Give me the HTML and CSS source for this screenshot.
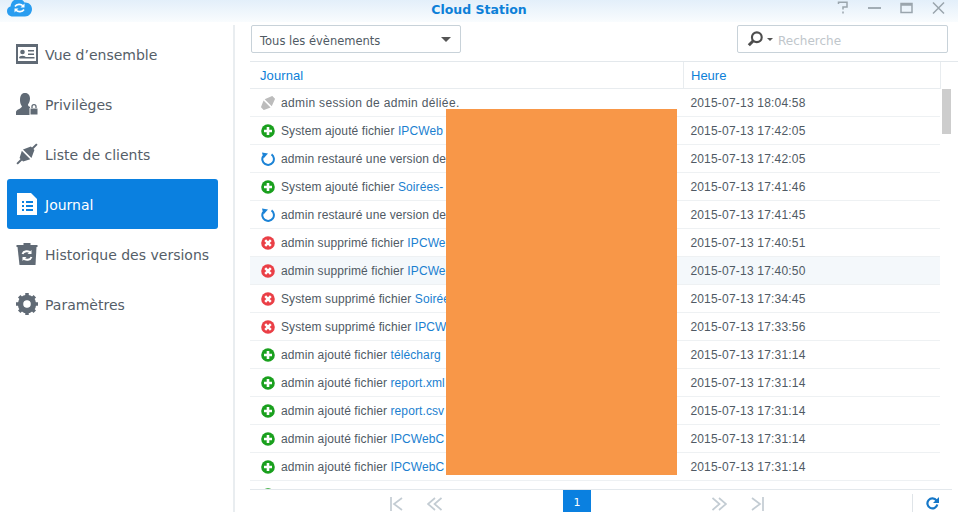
FILE: index.html
```html
<!DOCTYPE html>
<html lang="en">

<head>
    <meta charset="UTF-8">
    <meta name="viewport" content="width=device-width, initial-scale=1.0">
    <title>Cloud Station</title>
    <link rel="stylesheet" href="styles.css">
</head>

<body>
    <svg class="defs" width="0" height="0">
        <symbol id="add" viewBox="0 0 14 14">
            <circle cx="7" cy="7" r="6.8" fill="#1aa01e"/>
            <path d="M7 3v8M3 7h8" stroke="#fff" stroke-width="2.600"/>
        </symbol>
        <symbol id="del" viewBox="0 0 14 14">
            <circle cx="7" cy="7" r="6.8" fill="#ea3f46"/>
            <path d="M4.2 4.2l5.6 5.6M9.8 4.2l-5.6 5.6" stroke="#fff" stroke-width="2.500"/>
        </symbol>
        <symbol id="restore" viewBox="0 0 14 14">
            <path d="M10.5 2.4A5.8 5.8 0 1 1 2.2 4" fill="none" stroke="#1b83d6" stroke-width="2"/>
            <path d="M1 .4l6 1.200-4.500 5z" fill="#1b83d6"/>
        </symbol>
        <symbol id="plug" viewBox="0 0 14 14">
            <path transform="rotate(-45 7 7)" d="M-1 5L5.700 2v10L-1 9zM7.300 2L15 5v4l-7.700 3z" fill="#bcbcbc"/>
        </symbol>
    </svg>

    <header class="titlebar">
        <svg class="app-logo" width="25" height="18" viewBox="0 0 25 18">
            <path d="M6 17.500C2 17.500 0 15 0 12c0-2.500 1.500-4 3.500-4.500C4 3 7 0 11 0c3 0 5 1 6.500 3.500 4-.5 7.500 2.500 7.500 6.500 0 4-3 7.500-7 7.500z" fill="#2a9df0"/>
            <path d="M8 7.500c1.500-2.500 6-3 8-.5M17 10.500c-1.500 2.500-6 3-8 .5" fill="none" stroke="#fff" stroke-width="1.600"/>
            <path d="M17.500 4.500v4h-4zM7.500 13.500v-4h4z" fill="#fff"/>
        </svg>
        <div class="app-title">Cloud Station</div>
        <div class="win-buttons">
            <svg width="12" height="14" viewBox="0 0 12 14"><path d="M1.500 3V1.200h8.500V6H6v2.500M6 10.500v2" fill="none" stroke="#9aa5ad" stroke-width="1.500"/></svg>
            <svg width="13" height="14" viewBox="0 0 13 14"><path d="M0 7h13" stroke="#9aa5ad" stroke-width="1.800"/></svg>
            <svg width="13" height="14" viewBox="0 0 13 14"><path d="M1 2.500h11v9H1z" fill="none" stroke="#9aa5ad" stroke-width="1.500"/><path d="M1 3.500h11" stroke="#9aa5ad" stroke-width="2.500"/></svg>
            <svg width="13" height="14" viewBox="0 0 13 14"><path d="M1 1.500l11 11M12 1.500l-11 11" stroke="#9aa5ad" stroke-width="1.500"/></svg>
        </div>
    </header>

    <div class="app">
        <nav class="sidebar">
            <a class="navItem">
                <svg width="22" height="20" viewBox="0 0 22 20"><path d="M0 0h22v20H0z" fill="#606a75"/><path d="M2 3h18v14H2z" fill="#fff"/><circle cx="6.500" cy="8" r="2.300" fill="#606a75"/><path d="M3 14c0-3 7-3 7 0zM12 6h6v1.500h-6zM12 9.500h6V11h-6zM3.500 13h15v1.500h-15z" fill="#606a75"/></svg>
                <span>Vue d’ensemble</span>
            </a>
            <a class="navItem">
                <svg width="22" height="22" viewBox="0 0 22 22"><path d="M9 0c3.500 0 5 2.500 5 5.500 0 2.500-1 4.500-2 6 0 1.500 1 2 2 2.500v8H0v-3c0-2.500 5-3 6-5.500-1-1.500-2-3.500-2-6C4 2.500 5.500 0 9 0z" fill="#606a75"/><path d="M14 15h8v7h-8z" fill="#606a75" stroke="#fff"/><path d="M16 15v-1.500c0-2.500 4-2.500 4 0V15" fill="none" stroke="#606a75" stroke-width="1.300"/></svg>
                <span>Privilèges</span>
            </a>
            <a class="navItem">
                <svg width="22" height="22" viewBox="0 0 22 22"><g transform="rotate(-45 11 11)"><path d="M-3 11H4M18 11h7" stroke="#606a75" stroke-width="2"/><path d="M3 8.500L9.700 5v12L3 13.500zM11.300 5L19 8.500v5L11.300 17z" fill="#606a75"/></g></svg>
                <span>Liste de clients</span>
            </a>
            <a class="navItem active">
                <svg width="20" height="22" viewBox="0 0 20 22"><path d="M0 0h14l6 6v16H0z" fill="#fff"/><path d="M5 8h2v2H5zM9 8h7v2H9zM5 12h2v2H5zM9 12h7v2H9zM5 16h2v2H5zM9 16h7v2H9z" fill="#0a80e0"/></svg>
                <span>Journal</span>
            </a>
            <a class="navItem">
                <svg width="21" height="22" viewBox="0 0 21 22"><path d="M1 4h19l-1 18H3z" fill="#606a75"/><path d="M0 2h7V0h7v2h7v2H0z" fill="#606a75"/><path d="M6 11c1-3 6-4 8-1M15 14c-1 3-6 4-8 1" fill="none" stroke="#fff" stroke-width="2"/><path d="M15 7v4h-4zM6 18v-4h4z" fill="#fff"/></svg>
                <span>Historique des versions</span>
            </a>
            <a class="navItem">
                <svg width="22" height="22" viewBox="0 0 22 22"><circle cx="11" cy="11" r="6.500" fill="none" stroke="#606a75" stroke-width="5.500"/><path d="M11 0v22M0 11h22M3.200 3.200l15.600 15.600M18.800 3.200L3.200 18.800" stroke="#606a75" stroke-width="3.500" stroke-dasharray="3.500 15"/><circle cx="11" cy="11" r="3.200" fill="#fff"/></svg>
                <span>Paramètres</span>
            </a>
        </nav>

        <main class="content">
            <div class="toolbar">
                <div class="select">
                    <span>Tous les évènements</span>
                    <i class="caret"></i>
                </div>
                <div class="search">
                    <svg width="17" height="16" viewBox="0 0 19 18"><circle cx="11" cy="7" r="5.500" fill="none" stroke="#4d4d4d" stroke-width="2.400"/><path d="M7 11l-5 5" stroke="#4d4d4d" stroke-width="3.400"/></svg>
                    <i class="caret small"></i>
                    <span>Recherche</span>
                </div>
            </div>

            <div class="grid">
                <div class="gridHead">
                    <div class="col-log">Journal</div>
                    <div class="col-time">Heure</div>
                </div>
                <div class="gridBody">
                    <div class="row">
                        <div class="col-log first"><svg class="rowIcon"><use href="#plug"/></svg>admin session de admin déliée.</div>
                        <div class="col-time">2015-07-13 18:04:58</div>
                    </div>
                    <div class="row">
                        <div class="col-log"><svg class="rowIcon"><use href="#add"/></svg>System ajouté fichier <a>IPCWeb</a></div>
                        <div class="col-time">2015-07-13 17:42:05</div>
                    </div>
                    <div class="row">
                        <div class="col-log"><svg class="rowIcon"><use href="#restore"/></svg>admin restauré une version de</div>
                        <div class="col-time">2015-07-13 17:42:05</div>
                    </div>
                    <div class="row">
                        <div class="col-log"><svg class="rowIcon"><use href="#add"/></svg>System ajouté fichier <a>Soirées-</a></div>
                        <div class="col-time">2015-07-13 17:41:46</div>
                    </div>
                    <div class="row">
                        <div class="col-log"><svg class="rowIcon"><use href="#restore"/></svg>admin restauré une version de</div>
                        <div class="col-time">2015-07-13 17:41:45</div>
                    </div>
                    <div class="row">
                        <div class="col-log"><svg class="rowIcon"><use href="#del"/></svg>admin supprimé fichier <a>IPCWeb</a></div>
                        <div class="col-time">2015-07-13 17:40:51</div>
                    </div>
                    <div class="row hover">
                        <div class="col-log"><svg class="rowIcon"><use href="#del"/></svg>admin supprimé fichier <a>IPCWeb</a></div>
                        <div class="col-time">2015-07-13 17:40:50</div>
                    </div>
                    <div class="row">
                        <div class="col-log"><svg class="rowIcon"><use href="#del"/></svg>System supprimé fichier <a>Soirées</a></div>
                        <div class="col-time">2015-07-13 17:34:45</div>
                    </div>
                    <div class="row">
                        <div class="col-log"><svg class="rowIcon"><use href="#del"/></svg>System supprimé fichier <a>IPCWeb</a></div>
                        <div class="col-time">2015-07-13 17:33:56</div>
                    </div>
                    <div class="row">
                        <div class="col-log"><svg class="rowIcon"><use href="#add"/></svg>admin ajouté fichier <a>télécharg</a></div>
                        <div class="col-time">2015-07-13 17:31:14</div>
                    </div>
                    <div class="row">
                        <div class="col-log"><svg class="rowIcon"><use href="#add"/></svg>admin ajouté fichier <a>report.xml</a></div>
                        <div class="col-time">2015-07-13 17:31:14</div>
                    </div>
                    <div class="row">
                        <div class="col-log"><svg class="rowIcon"><use href="#add"/></svg>admin ajouté fichier <a>report.csv</a></div>
                        <div class="col-time">2015-07-13 17:31:14</div>
                    </div>
                    <div class="row">
                        <div class="col-log"><svg class="rowIcon"><use href="#add"/></svg>admin ajouté fichier <a>IPCWebC</a></div>
                        <div class="col-time">2015-07-13 17:31:14</div>
                    </div>
                    <div class="row">
                        <div class="col-log"><svg class="rowIcon"><use href="#add"/></svg>admin ajouté fichier <a>IPCWebC</a></div>
                        <div class="col-time">2015-07-13 17:31:14</div>
                    </div>
                    <!-- only the top of the next icon shows above the pager -->
                    <div class="row">
                        <div class="col-log"><svg class="rowIcon"><use href="#add"/></svg></div>
                    </div>
                    <!-- redaction box drawn over the file names -->
                    <div class="redacted"></div>
                    <div class="scrollThumb"></div>
                </div>
            </div>

            <div class="pager">
                <div class="pagerNav">
                    <svg width="13" height="14" viewBox="0 0 13 14"><path d="M1 0v14M12 1L4 7l8 6" fill="none" stroke="#c3ccd3" stroke-width="1.700"/></svg>
                    <svg width="15" height="14" viewBox="0 0 15 14"><path d="M8 1L1 7l7 6M14.500 1l-7 6 7 6" fill="none" stroke="#c3ccd3" stroke-width="1.700"/></svg>
                    <div class="pageNum">1</div>
                    <svg width="15" height="14" viewBox="0 0 15 14"><path d="M7 1l7 6-7 6M.5 1l7 6-7 6" fill="none" stroke="#c3ccd3" stroke-width="1.700"/></svg>
                    <svg width="13" height="14" viewBox="0 0 13 14"><path d="M12 0v14M1 1l8 6-8 6" fill="none" stroke="#c3ccd3" stroke-width="1.700"/></svg>
                </div>
                <div class="refresh">
                    <svg width="13" height="13" viewBox="0 0 13 13"><path d="M10.500 3.500a5 5 0 1 0 .8 4" fill="none" stroke="#1577c8" stroke-width="2.200"/><path d="M13 0v6H7z" fill="#1577c8"/></svg>
                </div>
            </div>
        </main>
    </div>
</body>
</html>
```

FILE: styles.css
```css
* {
    box-sizing: border-box;
}

html, body {
    margin: 0;
    height: 100%;
}

body {
    width: 958px;
    height: 512px;
    overflow: hidden;
    background-color: white;
    font-family: "Liberation Sans", Arial, sans-serif;
    font-size: 12px;
    color: #505a64;
}

.defs {
    position: absolute;
}

.titlebar {
    height: 22px;
    display: flex;
    align-items: center;
    justify-content: center;
    position: relative;
    background: linear-gradient(#e3effa, #f9fcfe);
}

.app-logo {
    position: absolute;
    left: 7px;
    top: -1px;
}

.app-title {
    font-family: "DejaVu Sans", Verdana, sans-serif;
    font-weight: bold;
    font-size: 12.5px;
    color: #0d80d8;
    margin-top: -3px;
}

.win-buttons {
    position: absolute;
    right: 13px;
    top: 1px;
    display: flex;
    gap: 19px;
}

.app {
    display: flex;
    height: 490px;
}

.sidebar {
    width: 235px;
    margin-top: 3px;
    padding: 4px 15px 0 7px;
    border-right: 2px solid #e9edf0;
}

.navItem {
    height: 50px;
    display: flex;
    align-items: center;
    gap: 7px;
    padding-left: 9px;
    border-radius: 3px;
    font-family: "DejaVu Sans", Verdana, sans-serif;
    font-size: 14px;
    color: #555e68;
}

.navItem span {
    padding-top: 2px;
}

.navItem svg {
    width: 22px;
    flex: none;
}

.navItem.active {
    background-color: #0a80e0;
    color: white;
}

.content {
    flex: 1;
    display: flex;
    flex-direction: column;
    min-width: 0;
    padding-left: 15px;
}

.toolbar {
    height: 39px;
    padding: 3px 10px 0 1px;
    display: flex;
    justify-content: space-between;
    align-items: flex-start;
}

.select, .search {
    height: 28px;
    display: flex;
    align-items: center;
    border: 1px solid #c8d2d9;
    border-radius: 2px;
    font-family: "DejaVu Sans", Verdana, sans-serif;
    font-size: 11.500px;
}

.select span, .search span {
    padding-top: 3px;
}

.select {
    width: 210px;
    justify-content: space-between;
    padding: 0 9px 0 8px;
}

.search {
    width: 211px;
    padding-left: 9px;
    color: #c0c6cb;
    font-size: 12px;
}

.caret {
    width: 0;
    height: 0;
    border-left: 5px solid transparent;
    border-right: 5px solid transparent;
    border-top: 5px solid #555;
}

.caret.small {
    border-left-width: 3px;
    border-right-width: 3px;
    border-top-width: 3px;
    margin: 0 5px 0 3px;
}

.grid {
    height: 428px;
    overflow: hidden;
    border-top: 1px solid #e3e8ec;
}

.gridHead {
    display: flex;
    height: 27px;
    width: 691px;
    border-bottom: 1px solid #e8ecef;
    color: #0d80d8;
    font-size: 13px;
    line-height: 28px;
}

.gridHead .col-log {
    align-items: flex-start;
}

.gridHead .col-time {
    padding-left: 7px;
    letter-spacing: 0;
    border-left: 1px solid #e8ecef;
    border-right: 1px solid #e8ecef;
}

.col-log {
    width: 433px;
    padding-left: 10px;
    display: flex;
    align-items: center;
    white-space: pre;
    letter-spacing: 0.1px;
}

.col-log.first {
    letter-spacing: 0.35px;
}

.col-time {
    width: 258px;
    padding-left: 8px;
    letter-spacing: 0.2px;
}

.gridBody {
    position: relative;
}

.row {
    display: flex;
    align-items: center;
    width: 690px;
    height: 28px;
    border-bottom: 1px solid #eef1f3;
}

.row.hover {
    background-color: #f4f8fb;
}

.row a {
    color: #1b7fd0;
}

.rowIcon {
    width: 14px;
    height: 14px;
    margin: 0 6px 0 1px;
    flex: none;
}

.redacted {
    position: absolute;
    left: 196px;
    top: 20px;
    width: 231px;
    height: 366px;
    background-color: #f89748;
}

.scrollThumb {
    position: absolute;
    left: 692px;
    top: 0;
    width: 9px;
    height: 45px;
    background-color: #cdcdcd;
}

.pager {
    height: 23px;
    width: 702px;
    display: flex;
    border-top: 1px solid #e3e8ec;
}

.pagerNav {
    width: 654px;
    display: flex;
    justify-content: center;
    align-items: center;
    gap: 24px;
    padding-top: 5px;
}

.pageNum {
    width: 28px;
    height: 22px;
    margin: -5px 97px 0;
    background-color: #0a80e0;
    color: white;
    text-align: center;
    line-height: 26px;
    font-family: "DejaVu Sans", Verdana, sans-serif;
    font-size: 11px;
}

.refresh {
    width: 40px;
    height: 18px;
    margin-top: 4px;
    margin-left: 8px;
    display: flex;
    align-items: center;
    justify-content: center;
    border-left: 1px solid #dfe4e8;
}
```
